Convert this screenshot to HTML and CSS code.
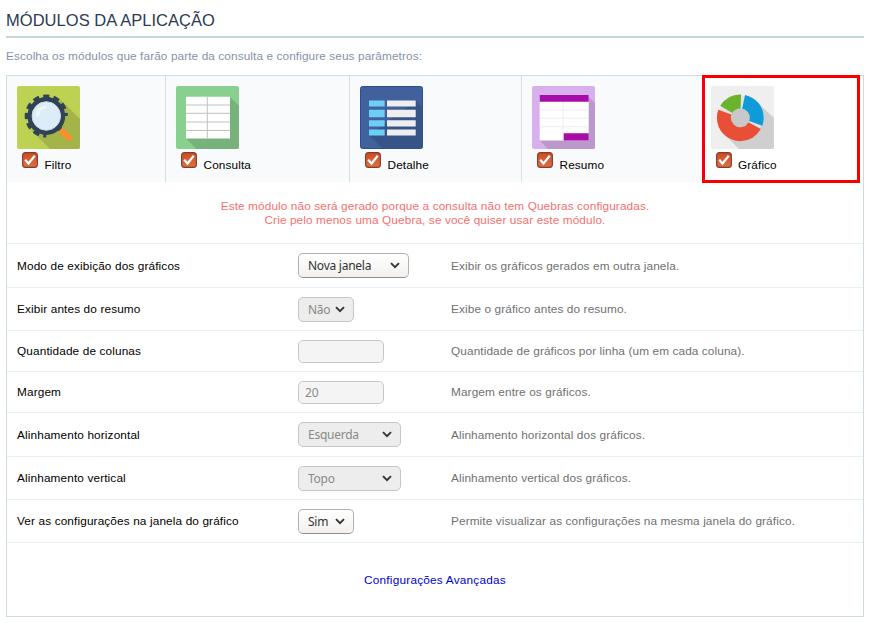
FILE: index.html
```html
<!DOCTYPE html>
<html lang="pt-BR">
<head>
<meta charset="utf-8">
<title>Módulos da Aplicação</title>
<link rel="stylesheet" href="styles.css">
</head>
<body>
<svg width="0" height="0" class="defs" aria-hidden="true">
  <defs>
    <linearGradient id="tick-bg" x1="0" y1="0" x2="0" y2="1"><stop offset="0" stop-color="#cf4a22"/><stop offset="1" stop-color="#dc7244"/></linearGradient>
    <symbol id="check" viewBox="0 0 16 16">
      <rect x=".6" y=".6" width="14.8" height="14.8" rx="3" fill="url(#tick-bg)" stroke="#843d2b" stroke-width="1.1"/>
      <path d="M3.2 7.8l3.3 3.7 6.3-7.7" fill="none" stroke="#fff" stroke-width="2.3"/>
    </symbol>
    <symbol id="chevron" viewBox="0 0 10 7"><path d="M1 1.2l4 4 4-4" fill="none" stroke="#333" stroke-width="1.9"/></symbol>
  </defs>
</svg>
<h1>MÓDULOS DA APLICAÇÃO</h1>
<p class="intro">Escolha os módulos que farão parte da consulta e configure seus parâmetros:</p>
<main class="panel">
  <nav class="tabs">
    <div class="tab">
      <svg class="icon" viewBox="0 0 63 63">
        <rect width="63" height="63" rx="2" fill="#bdd152"/>
        <path d="M44 14L63 33V61q0 2-2 2H33L14 44z" fill="#a5b449"/>
        <circle cx="29.3" cy="30" r="16.6" fill="none" stroke="#2f4257" stroke-width="4.6"/>
        <path d="M29.3 49.6A19.6 19.6 0 1 1 48.9 30" pathLength="90" fill="none" stroke="#2f4257" stroke-width="4" stroke-dasharray="6 4" stroke-dashoffset="3"/>
        <circle cx="29.3" cy="30" r="14.2" fill="#dcecf8" stroke="#cbd8e2" stroke-width="1"/>
        <path d="M20.5 30a9 9 0 0 1 9-9" fill="none" stroke="#eef6fd" stroke-width="3"/>
        <path d="M40 40l4 4" stroke="#2f4257" stroke-width="3.6"/>
        <path d="M45 45l7 7" stroke="#f9902d" stroke-width="6" stroke-linecap="round"/>
        <path d="M41 44.5l3.5-3.5" stroke="#2f4257" stroke-width="2"/>
      </svg>
      <label><svg class="check"><use href="#check"/></svg><span>Filtro</span></label>
    </div>
    <div class="tab">
      <svg class="icon" viewBox="0 0 63 63">
        <rect width="63" height="63" rx="2" fill="#89d08e"/>
        <path d="M54 11l9 9v41q0 2-2 2H20.5L10 52.5z" fill="#77b27b"/>
        <path d="M10 10.8h44v41.7H10z" fill="#fff"/>
        <path d="M10 19h44M10 27.3h44M10 36h44M10 44.5h44M31.3 10.8v41.7" stroke="#c0c0bc" stroke-width="1"/>
      </svg>
      <label><svg class="check"><use href="#check"/></svg><span>Consulta</span></label>
    </div>
    <div class="tab">
      <svg class="icon" viewBox="0 0 63 63">
        <rect x=".5" y=".5" width="62" height="62" rx="2" fill="#40619c" stroke="#2c508e"/>
        <path d="M55.7 14.5l7 7V61q0 1.500-1.500 1.500H23L9 49.500z" fill="#375487"/>
        <path d="M9 14.5h15.7v6H9zM9 23.8h15.7v7.4H9zM9 34.2h15.7v6.3H9zM9 43.4h15.7v6H9z" fill="#6dcff6"/>
        <path d="M27 14.5h28.7v6H27zM27 23.8h28.7v7.4H27zM27 34.2h28.7v6.3H27zM27 43.4h28.7v6H27z" fill="#eee"/>
      </svg>
      <label><svg class="check"><use href="#check"/></svg><span>Detalhe</span></label>
    </div>
    <div class="tab">
      <svg class="icon" viewBox="0 0 63 63">
        <rect width="63" height="63" rx="2" fill="#d9b0ee"/>
        <path d="M56.7 11l6.3 6v44q0 2-2 2H16L7.7 54.5z" fill="#ba98cc"/>
        <path d="M7.7 9h49v45.5h-49z" fill="#fff"/>
        <path d="M7.7 24h49M7.7 32.2h49M7.7 40.8h49M31 16v38" stroke="#eee" stroke-width="1"/>
        <path d="M7.7 9h49v6.8h-49zM31.7 47.3h25v7.2h-25z" fill="#a80ca8"/>
      </svg>
      <label><svg class="check"><use href="#check"/></svg><span>Resumo</span></label>
    </div>
    <div class="tab selected">
      <svg class="icon" viewBox="0 0 63 63">
        <rect width="63" height="63" rx="2" fill="#efefef"/>
        <path d="M45 15l18 17v29q0 2-2 2H28L11 46z" fill="#cfcfcf"/>
        <circle cx="29.3" cy="31.8" r="22" fill="#e3e3e3"/>
        <circle cx="29.3" cy="31.8" r="9.5" fill="#c8c8c8"/>
        <g fill="none" stroke-width="14">
          <circle cx="29.3" cy="31.8" r="16.4" stroke="#e94f37" pathLength="360" stroke-dasharray="171 189" stroke-dashoffset="-29"/>
          <circle cx="29.3" cy="31.8" r="16.4" stroke="#6ab42d" pathLength="360" stroke-dasharray="61 299" stroke-dashoffset="-211"/>
          <circle cx="29.3" cy="31.8" r="16.4" stroke="#0f9bd7" pathLength="360" stroke-dasharray="98 262" stroke-dashoffset="-282"/>
        </g>
      </svg>
      <label><svg class="check"><use href="#check"/></svg><span>Gráfico</span></label>
    </div>
  </nav>
  <div class="warning">Este módulo não será gerado porque a consulta não tem Quebras configuradas.<br>Crie pelo menos uma Quebra, se você quiser usar este módulo.</div>
  <div class="row r1"><span class="name">Modo de exibição dos gráficos</span><div class="select wide"><span>Nova janela</span><svg><use href="#chevron"/></svg></div><span class="help">Exibir os gráficos gerados em outra janela.</span></div>
  <div class="row r2"><span class="name">Exibir antes do resumo</span><div class="select small off"><span>Não</span><svg><use href="#chevron"/></svg></div><span class="help">Exibe o gráfico antes do resumo.</span></div>
  <div class="row r3"><span class="name">Quantidade de colunas</span><div class="field"></div><span class="help">Quantidade de gráficos por linha (um em cada coluna).</span></div>
  <div class="row r4"><span class="name">Margem</span><div class="field">20</div><span class="help">Margem entre os gráficos.</span></div>
  <div class="row r5"><span class="name">Alinhamento horizontal</span><div class="select medium off"><span>Esquerda</span><svg><use href="#chevron"/></svg></div><span class="help">Alinhamento horizontal dos gráficos.</span></div>
  <div class="row r6"><span class="name">Alinhamento vertical</span><div class="select medium off"><span>Topo</span><svg><use href="#chevron"/></svg></div><span class="help">Alinhamento vertical dos gráficos.</span></div>
  <div class="row r7"><span class="name">Ver as configurações na janela do gráfico</span><div class="select small"><span>Sim</span><svg><use href="#chevron"/></svg></div><span class="help">Permite visualizar as configurações na mesma janela do gráfico.</span></div>
  <div class="more"><a>Configurações Avançadas</a></div>
</main>
</body>
</html>
```
FILE: styles.css
```css
*, *::after { box-sizing: border-box; }
body { margin: 0; padding: 0 6px; height: 624px; overflow: hidden; background: #fff; color: #000; font: 11.8px/14px "Liberation Sans", Arial, sans-serif; letter-spacing: .11px; }
.defs { position: absolute; }
h1 { margin: 0; height: 38px; padding-top: 10px; border-bottom: 2px solid #c5d5de; font-size: 16.5px; line-height: 21px; font-weight: 400; color: #2c3a50; width: 858px; letter-spacing: .04px; }
.intro { margin: 0; height: 37px; padding-top: 11px; color: #8492a9; letter-spacing: .1px; }
.panel { width: 858px; height: 542px; border: 1px solid #cddce3; }
.tabs { display: grid; grid-template-columns: 159px 184px 172px 180px 161px; height: 106px; }
.tab { padding: 9.5px 0 0 10px; background: #f8fafc; border-right: 1px solid #d5e1e8; }
.tab:nth-child(4) { border: 0; }
.tab.selected { position: relative; border: 0; background: #fff; padding-left: 8.5px; }
.tab.selected::after { content: ""; position: absolute; left: 0; top: -1px; width: 158px; height: 108px; border: 3px solid #f80000; }
.icon { display: block; width: 63px; height: 63px; }
label { display: flex; height: 24px; padding: 3.5px 0 0 5px; }
.check { width: 16px; height: 16px; margin-right: 6.5px; }
label span { padding-top: 6px; }
.warning { height: 62px; padding-top: 17px; text-align: center; color: #f97070; border-bottom: 1px solid #eaf0f2; }
.row { display: grid; grid-template-columns: 281px 153px 1fr; align-items: center; padding-left: 10px; height: 43px; border-bottom: 1px solid #eaf0f3; }
.name { letter-spacing: .13px; }
.help { color: #707070; }
.r1 { height: 44px; }
.r3 { height: 41px; }
.r4 { height: 41px; }
.r5 { height: 44px; }
.select, .field { font: 12px/15px "Noto Sans", sans-serif; letter-spacing: -.25px; border: 1px solid #b5b2ae; border-radius: 5px; display: flex; align-items: center; }
.select { height: 25px; padding: 0 8px 0 9px; justify-content: space-between; background: linear-gradient(#fff, #f2f1ef); border-bottom-color: #918e89; color: #333; }
.select svg { width: 10px; height: 7px; }
.wide { width: 111px; }
.medium { width: 103px; }
.small { width: 56px; }
.off { background: #ededed; border-color: #c6c6c6; color: #8b8984; }
.field { width: 86px; height: 23px; padding-left: 6px; background: #f4f4f4; border-color: #c6c6c6; color: #8b8984; letter-spacing: 0; }
.more { padding-top: 30px; text-align: center; color: #0000d8; letter-spacing: .22px; }
```
